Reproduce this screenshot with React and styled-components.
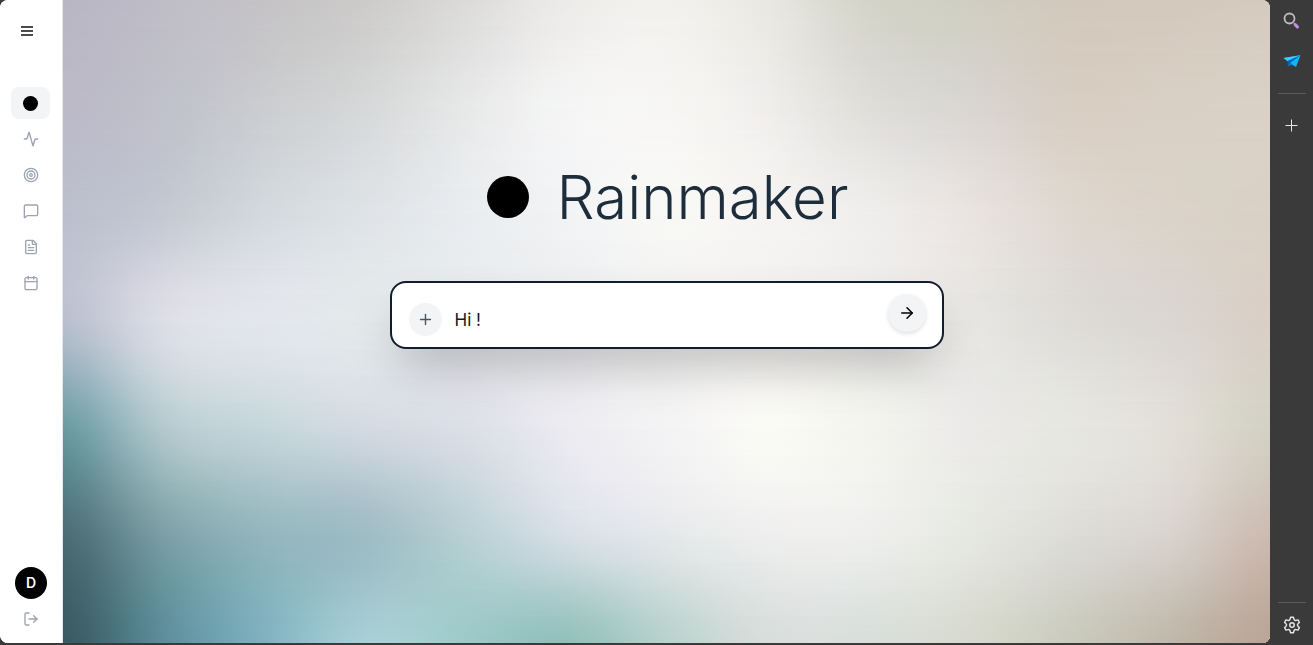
import React from "react";
import styled, { createGlobalStyle } from "styled-components";
import {
  Activity,
  ArrowRight,
  Calendar,
  FileText,
  LogOut,
  MessageSquare,
  Plus,
  Target,
} from "lucide-react";

const GlobalStyle = createGlobalStyle`
  *, *::before, *::after { box-sizing: border-box; }
  body {
    margin: 0;
    background: #3a3a3a;
    font-family: Inter, "Liberation Sans", sans-serif;
  }
  button { font: inherit; border: 0; padding: 0; cursor: pointer; }
`;

const Shell = styled.div`
  display: flex;
  min-height: 100vh;
  background: #3a3a3a;
`;

const Frame = styled.div`
  display: flex;
  flex: 1;
  min-width: 0;
  margin-bottom: 2px;
  border-radius: 8px;
  overflow: hidden;
  background: #fff;
`;

const Sidebar = styled.aside`
  display: flex;
  flex-direction: column;
  justify-content: space-between;
  align-items: center;
  width: 63px;
  padding: 15px 0 8px;
  border-right: 1px solid #e5e7eb;
  background: #fff;
`;

const SidebarGroup = styled.div`
  display: flex;
  flex-direction: column;
  align-items: center;
  gap: 4px;
`;

const MenuButton = styled.button`
  display: grid;
  place-items: center;
  align-self: flex-start;
  width: 32px;
  height: 32px;
  margin-bottom: 36px;
  background: none;
  color: #4b4b4b;
`;

const Nav = styled.nav`
  display: flex;
  flex-direction: column;
  gap: 4px;
  padding-right: 1px;
`;

const NavLink = styled.a`
  display: grid;
  place-items: center;
  width: 39px;
  height: 32px;
  border-radius: 8px;
  color: #9ca3af;
  background: ${(p) => (p.$active ? "#f3f4f6" : "transparent")};
`;

const Dot = styled.span`
  display: block;
  flex: none;
  width: ${(p) => p.$size}px;
  height: ${(p) => p.$size}px;
  border-radius: 50%;
  background: #000;
`;

const Avatar = styled.button`
  width: 32px;
  height: 32px;
  border-radius: 50%;
  background: #000;
  color: #fff;
  font-size: 14px;
  font-weight: 600;
  line-height: 20px;
`;

const LogoutButton = styled.button`
  display: grid;
  place-items: center;
  width: 40px;
  height: 32px;
  background: none;
  color: #9ca3af;
`;

const Main = styled.main`
  position: relative;
  isolation: isolate;
  flex: 1;
  min-width: 0;
  display: flex;
  flex-direction: column;
  align-items: center;
  gap: 54px;
  padding: 167px 24px 40px;
`;

const Backdrop = styled.div`
  position: absolute;
  inset: 0;
  z-index: -1;
  overflow: hidden;
`;

const Band = styled.div`
  position: absolute;
  inset: 0;
  background: linear-gradient(to right, ${(p) => p.$stops});
  mask-image: ${(p) =>
    p.$from === null
      ? "none"
      : `linear-gradient(to bottom, transparent ${p.$from}%, #000 ${p.$to}%)`};
`;

const Brand = styled.div`
  display: flex;
  align-items: center;
  gap: 28px;
  padding-left: 2px;
`;

const Title = styled.h1`
  margin: 0;
  font-size: 60px;
  font-weight: 300;
  line-height: 60px;
  color: #1e2d3b;
`;

const Composer = styled.form`
  display: flex;
  align-items: center;
  width: 100%;
  max-width: 554px;
  height: 68px;
  padding: 0 16px;
  border: 2px solid #111c2d;
  border-radius: 16px;
  background: #fff;
  box-shadow: 0 25px 50px -12px rgba(0, 0, 0, 0.25);
`;

const Field = styled.div`
  display: flex;
  flex: 1;
  align-items: center;
  gap: 13px;
  padding: 8px 0 0 1px;
`;

const RoundButton = styled.button`
  display: grid;
  place-items: center;
  flex: none;
  width: ${(p) => p.$size}px;
  height: ${(p) => p.$size}px;
  border-radius: 50%;
  background: #f3f4f6;
  color: ${(p) => p.$color};
  box-shadow: ${(p) => (p.$raised ? "0 2px 4px rgba(0, 0, 0, 0.12)" : "none")};
`;

const SendSlot = styled.div`
  padding-bottom: 4px;
`;

const PromptInput = styled.input`
  flex: 1;
  min-width: 0;
  padding: 2px 0 0;
  border: 0;
  outline: 0;
  background: transparent;
  font: 400 17px/24px Inter, "Liberation Sans", sans-serif;
  color: #111827;
`;

const Rail = styled.aside`
  display: flex;
  flex-direction: column;
  justify-content: space-between;
  align-items: center;
  width: 43px;
  padding: 5px 0 4px;
`;

const RailGroup = styled.div`
  display: flex;
  flex-direction: column;
  align-items: center;
  gap: 8px;
`;

const RailButton = styled.button`
  display: grid;
  place-items: center;
  width: 32px;
  height: 32px;
  background: none;
  color: #e6e6e6;
`;

const RailRule = styled.hr`
  width: 28px;
  height: 1px;
  margin: ${(p) => p.$margin};
  border: 0;
  background: #5c5c5c;
`;

/* Control colours of the backdrop mesh: evenly spaced rows and columns. */
const MESH = [
  "b9b6c4 bfbdc7 c5c3c6 cdccca dcdbda ecebe9 f2f1ee e9e8e2 d5d4c9 d0cfc2 d3c9bd d4c9bd d5cbbf",
  "bcbac8 c0c1cb cbcdd0 d6d8d9 e7e8e8 f5f5f5 f7f6f4 f0eeec dfdeda d9d6d2 d8cec3 d9d0c5 dad1c7",
  "bcbfcd c5c9d3 d4d9de dfe3e6 e9ecef f2f3f4 f8f8f6 f6f4f2 efeeec e9e4e1 dfd8d0 dbd3c9 dad1c6",
  "b9bfce dddee7 e3e6ec e4e9eb e7eaec ecedf0 f1f1f1 f2f1f0 efedec e7e6e3 dedcd8 dad6d1 dacfc6",
  "6a9aa2 b3c9ce c5d6db d3dae2 dcdfe7 ebebf0 f4f3f4 fafaf6 f3f4ef ebeae8 e7e7e1 e2dfd8 d3d1c4",
  "4a6c73 7a9fa5 93b6bd 9ebcc4 b8d0d4 d7dfe7 e5e8ea eeeeee eeefed e6e8e2 dddcd8 d8d3cd ccbab0",
  "385960 5b8e9b 7fb2c0 a8d0d6 9dcac9 91c0bb b7d2cc d7dddb d8deda d7d9ce cacbbd c0b8aa b9a597",
].map((row) => row.split(" ").map((hex) => [0, 2, 4].map((i) => parseInt(hex.slice(i, i + 2), 16))));

const SUBDIVISIONS = 4;

/* Catmull-Rom subdivision, so colours flow through each control without creases. */
function subdivide(points, mix) {
  const last = points.length - 1;
  const at = (i) => points[Math.max(0, Math.min(last, i))];
  return Array.from({ length: last * SUBDIVISIONS + 1 }, (_, n) => {
    const i = Math.floor(n / SUBDIVISIONS);
    const t = (n % SUBDIVISIONS) / SUBDIVISIONS;
    const weights = [
      (-t + 2 * t * t - t ** 3) / 2,
      (2 - 5 * t * t + 3 * t ** 3) / 2,
      (t + 4 * t * t - 3 * t ** 3) / 2,
      (t ** 3 - t * t) / 2,
    ];
    return mix([at(i - 1), at(i), at(i + 1), at(i + 2)], weights);
  });
}

const mixColours = (colours, weights) =>
  [0, 1, 2].map((c) => colours.reduce((sum, colour, k) => sum + colour[c] * weights[k], 0));
const mixRows = (rows, weights) =>
  rows[0].map((_, x) => mixColours(rows.map((row) => row[x]), weights));

const BANDS = subdivide(
  MESH.map((row) => subdivide(row, mixColours)),
  mixRows
).map((row, i, all) => ({
  from: i ? ((i - 1) / (all.length - 1)) * 100 : null,
  to: (i / (all.length - 1)) * 100,
  stops: row.map((colour) => `rgb(${colour.map(Math.round).join(" ")})`).join(", "),
}));

const NAV_ITEMS = [
  { label: "Activity", Icon: Activity },
  { label: "Goals", Icon: Target },
  { label: "Messages", Icon: MessageSquare },
  { label: "Documents", Icon: FileText },
  { label: "Calendar", Icon: Calendar },
];

function MenuIcon() {
  return (
    <svg width="12" height="10" viewBox="0 0 12 10" fill="currentColor" aria-hidden="true">
      <path d="M0 0h12v2H0zM0 4h12v2H0zM0 8h12v2H0z" />
    </svg>
  );
}

function SearchIcon() {
  return (
    <svg width="18" height="18" viewBox="0 0 18 18" fill="none" aria-hidden="true">
      <circle cx="6.5" cy="6.5" r="5" stroke="#bdbdbd" strokeWidth="1.8" />
      <path d="M10.2 10.2l1.6 1.6" stroke="#8d8d8d" strokeWidth="1.4" />
      <path d="M12.2 12.6l2.2 2.2" stroke="#c58bea" strokeWidth="3.2" strokeLinecap="round" />
    </svg>
  );
}

function PlaneIcon() {
  return (
    <svg width="18" height="14" viewBox="0 0 18 14" aria-hidden="true">
      <path d="M0.5 4L17.5 1.2 13 13 8 10z" fill="#12b5f5" />
      <path d="M0.5 4L17.5 1.2 4.6 7z" fill="#35d0fb" />
      <path d="M4.6 7L17.5 1.2 7.4 8.8 4.8 12.6z" fill="#0560b8" />
      <path d="M4.8 12.6L7.4 8.8 9 10.4z" fill="#0b82dc" />
    </svg>
  );
}

function ThinPlusIcon() {
  return (
    <svg width="13" height="13" viewBox="0 0 13 13" stroke="currentColor" aria-hidden="true">
      <path d="M6.5 0.5v12M0.5 6.5h12" />
    </svg>
  );
}

function GearIcon() {
  return (
    <svg
      width="20"
      height="20"
      viewBox="0 0 24 24"
      fill="none"
      stroke="currentColor"
      strokeWidth="1.7"
      strokeLinejoin="round"
      aria-hidden="true"
    >
      <path d="M9.6 5.100L10.300 2.700h3.400l.7 2.400c.3 1 1.300 1.600 2.400 1.300l2.400-.6 1.700 2.900-1.700 1.800c-.8.8-.8 2.200 0 3l1.700 1.800-1.700 2.900-2.400-.6c-1.100-.3-2.100.3-2.400 1.300l-.7 2.400h-3.400l-.7-2.400c-.3-1-1.300-1.600-2.400-1.300l-2.400.6-1.700-2.900 1.700-1.800c.8-.8.8-2.200 0-3L3.100 8.700l1.700-2.900 2.400.6c1.100.3 2.100-.3 2.400-1.300z" />
      <circle cx="12" cy="12" r="2.700" />
    </svg>
  );
}

export default function App() {
  return (
    <>
      <GlobalStyle />
      <Shell>
        <Frame>
          <Sidebar>
            <SidebarGroup>
              <MenuButton type="button" aria-label="Open menu">
                <MenuIcon />
              </MenuButton>
              <Nav aria-label="Main">
                <NavLink href="#home" aria-label="Home" $active>
                  <Dot $size={15} />
                </NavLink>
                {NAV_ITEMS.map(({ label, Icon }) => (
                  <NavLink key={label} href={`#${label.toLowerCase()}`} aria-label={label}>
                    <Icon size={16} strokeWidth={2} />
                  </NavLink>
                ))}
              </Nav>
            </SidebarGroup>
            <SidebarGroup>
              <Avatar type="button" aria-label="Account D">D</Avatar>
              <LogoutButton type="button" aria-label="Log out">
                <LogOut size={16} />
              </LogoutButton>
            </SidebarGroup>
          </Sidebar>
          <Main>
            <Backdrop aria-hidden="true">
              {BANDS.map(({ from, to, stops }) => (
                <Band key={to} $stops={stops} $from={from} $to={to} />
              ))}
            </Backdrop>
            <Brand>
              <Dot $size={42} />
              <Title>Rainmaker</Title>
            </Brand>
            <Composer onSubmit={(e) => e.preventDefault()}>
              <Field>
                <RoundButton type="button" aria-label="Add attachment" $size={33} $color="#4b5563">
                  <Plus size={17} strokeWidth={2} />
                </RoundButton>
                <PromptInput aria-label="Message" defaultValue="Hi !" />
              </Field>
              <SendSlot>
                <RoundButton type="submit" aria-label="Send" $size={38} $color="#000" $raised>
                  <ArrowRight size={18} strokeWidth={2} />
                </RoundButton>
              </SendSlot>
            </Composer>
          </Main>
        </Frame>
        <Rail>
          <RailGroup>
            <RailButton type="button" aria-label="Search">
              <SearchIcon />
            </RailButton>
            <RailButton type="button" aria-label="Messenger">
              <PlaneIcon />
            </RailButton>
            <RailRule $margin="8px 0 7px" />
            <RailButton type="button" aria-label="Add panel">
              <ThinPlusIcon />
            </RailButton>
          </RailGroup>
          <RailGroup>
            <RailRule $margin="0 0 -2px" />
            <RailButton type="button" aria-label="Settings">
              <GearIcon />
            </RailButton>
          </RailGroup>
        </Rail>
      </Shell>
    </>
  );
}
